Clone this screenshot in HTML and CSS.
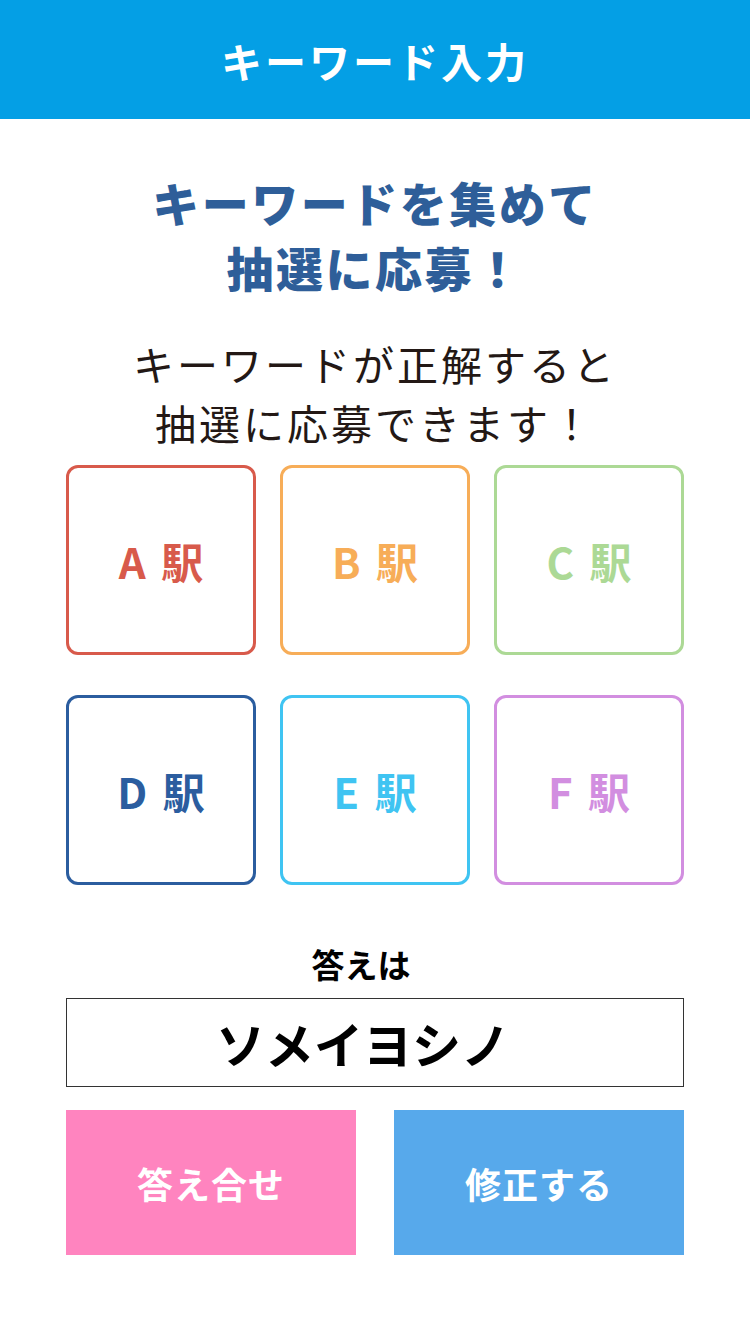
FILE: index.html
```html
<!DOCTYPE html>
<html lang="ja">
  <head>
    <meta charset="UTF-8" />
    <meta name="viewport" content="width=device-width, initial-scale=1.0" />
    <title>キーワード入力</title>
    <link rel="stylesheet" href="styles.css">
  </head>
  <body>
    <header class="title-bar">
      <h1>キーワード入力</h1>
    </header>
    <main class="content">
      <h2 class="lead">キーワードを集めて<br />抽選に応募！</h2>
      <p class="note">キーワードが正解すると<br />抽選に応募できます！</p>
      <div class="stations">
        <div class="station station-a">A 駅</div>
        <div class="station station-b">B 駅</div>
        <div class="station station-c">C 駅</div>
        <div class="station station-d">D 駅</div>
        <div class="station station-e">E 駅</div>
        <div class="station station-f">F 駅</div>
      </div>
      <p class="answer-label">答えは</p>
      <div class="answer-box">ソメイヨシノ</div>
      <div class="actions">
        <button type="button" class="btn btn-check">答え合せ</button>
        <button type="button" class="btn btn-edit">修正する</button>
      </div>
    </main>
  </body>
</html>
```

FILE: styles.css
```css
body {
  margin: 0;
  font-family: "Noto Sans CJK JP", "Noto Sans", sans-serif;
  background: #fff;
  color: #231815;
}
.title-bar {
  background-color: #049fe5;
  height: 119px;
  display: flex;
  justify-content: center;
  align-items: center;
}
.title-bar h1 {
  margin: 0;
  color: #fff;
  font-size: 41px;
  font-weight: 700;
  letter-spacing: 3px;
}
.content {
  padding: 0 66px;
  text-align: center;
}
.lead {
  margin: 50px 0 0;
  color: #2e5e99;
  font-size: 47px;
  line-height: 65px;
  font-weight: 900;
  letter-spacing: 2.5px;
}
.note {
  margin: 35px 0 0;
  font-size: 41px;
  line-height: 59px;
  letter-spacing: 3px;
}
.stations {
  margin-top: 13px;
  display: grid;
  grid-template-columns: repeat(3, 190px);
  grid-auto-rows: 190px;
  column-gap: 24px;
  row-gap: 40px;
}
.station {
  box-sizing: border-box;
  border: 3px solid;
  border-radius: 12px;
  display: flex;
  justify-content: center;
  align-items: center;
  font-size: 42px;
  font-weight: 700;
  word-spacing: 6px;
}
.station-a { color: #d85a4b; }
.station-b { color: #f7ad58; }
.station-c { color: #acd995; }
.station-d { color: #2b5d9f; }
.station-e { color: #3fc4f2; }
.station-f { color: #d28ee0; }
.answer-label {
  margin: 59px 0 0;
  padding-right: 28px;
  font-size: 33px;
  line-height: 40px;
  font-weight: 700;
  color: #000;
}
.answer-box {
  margin-top: 14px;
  height: 89px;
  box-sizing: border-box;
  border: 1.5px solid #333;
  padding-right: 24px;
  display: flex;
  justify-content: center;
  align-items: center;
  font-size: 49px;
  font-weight: 700;
  color: #000;
}
.actions {
  margin-top: 23px;
  display: grid;
  grid-template-columns: 290px 290px;
  justify-content: space-between;
}
.btn {
  height: 145px;
  border: none;
  color: #fff;
  font-family: inherit;
  font-size: 36px;
  font-weight: 700;
  letter-spacing: 1px;
  cursor: pointer;
}
.btn-check {
  background-color: #ff84bf;
}
.btn-edit {
  background-color: #57a9eb;
}
```
